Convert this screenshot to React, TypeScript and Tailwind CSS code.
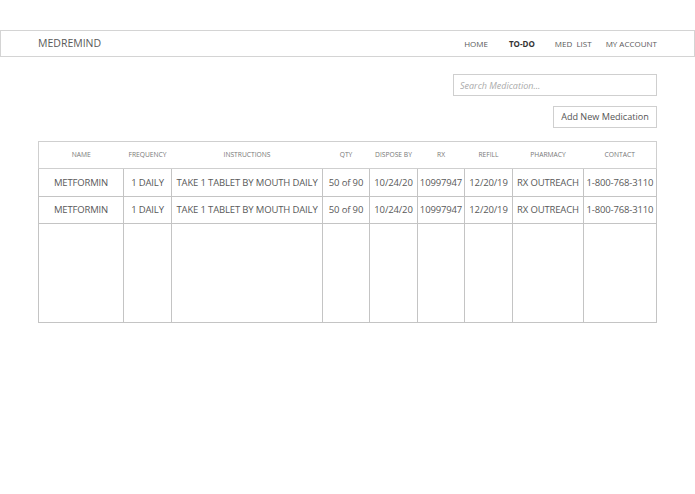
const meds = [
  { name: 'METFORMIN', freq: '1 DAILY', instr: 'TAKE 1 TABLET BY MOUTH DAILY', qty: '50 of 90', dispose: '10/24/20', rx: '10997947', refill: '12/20/19', pharmacy: 'RX OUTREACH', contact: '1-800-768-3110' },
  { name: 'METFORMIN', freq: '1 DAILY', instr: 'TAKE 1 TABLET BY MOUTH DAILY', qty: '50 of 90', dispose: '10/24/20', rx: '10997947', refill: '12/20/19', pharmacy: 'RX OUTREACH', contact: '1-800-768-3110' },
]

const cols = [
  { label: 'NAME', w: 85 },
  { label: 'FREQUENCY', w: 48 },
  { label: 'INSTRUCTIONS', w: 151 },
  { label: 'QTY', w: 47 },
  { label: 'DISPOSE BY', w: 48 },
  { label: 'RX', w: 47 },
  { label: 'REFILL', w: 48 },
  { label: 'PHARMACY', w: 71 },
  { label: 'CONTACT', w: 73 },
]

export default function App() {
  return (
    <div className="h-[494px] w-[695px] bg-white pt-[30px] font-['Open_Sans',sans-serif] text-[#595959]">
      <header className="flex h-[27px] items-center justify-between border border-[#d4d4d4] pl-[37px] pr-[37px]">
        <span className="text-[10.5px]">MEDREMIND</span>
        <nav className="flex items-center pt-[1px] text-[8px]">
          <span className="mr-[21px]">HOME</span>
          <span className="mr-[20px] font-bold text-[#333]">TO-DO</span>
          <span className="mr-[14px]">MED&nbsp; LIST</span>
          <span>MY ACCOUNT</span>
        </nav>
      </header>

      <div className="mt-[17px] flex flex-col items-end pr-[38px]">
        <input
          className="h-[22px] w-[204px] border border-[#cfcfcf] px-[6px] text-[9px] italic outline-none placeholder:text-[#aaa]"
          placeholder="Search Medication..."
        />
        <button className="mt-[10px] h-[22px] w-[104px] border border-[#cfcfcf] text-[9.1px] text-[#555]">
          Add New Medication
        </button>
      </div>

      <div className="ml-[38px] mt-[13px]">
        <table className="w-[618px] table-fixed border-collapse text-center">
          <colgroup>
            {cols.map((c) => (
              <col key={c.label} style={{ width: c.w }} />
            ))}
          </colgroup>
          <thead>
            <tr className="h-[27px]">
              {cols.map((c, i) => (
                <th
                  key={c.label}
                  className={`border-y border-[#cfcfcf] text-[6.7px] font-normal text-[#777] ${i === 0 ? 'border-l' : ''} ${i === cols.length - 1 ? 'border-r' : ''}`}
                >
                  {c.label}
                </th>
              ))}
            </tr>
          </thead>
          <tbody className="text-[9.5px] tracking-[-0.15px] text-[#595959]">
            {meds.map((m, i) => (
              <tr key={i} className={i === 0 ? 'h-[28px]' : 'h-[27px]'}>
                {[m.name, m.freq, m.instr, m.qty, m.dispose, m.rx, m.refill, m.pharmacy, m.contact].map((v, j) => (
                  <td key={j} className="whitespace-nowrap border border-[#c4c4c4] px-0 pt-[1px]">
                    {v}
                  </td>
                ))}
              </tr>
            ))}
            <tr className="h-[99px]">
              {cols.map((c) => (
                <td key={c.label} className="border border-[#c4c4c4]" />
              ))}
            </tr>
          </tbody>
        </table>
      </div>
    </div>
  )
}
